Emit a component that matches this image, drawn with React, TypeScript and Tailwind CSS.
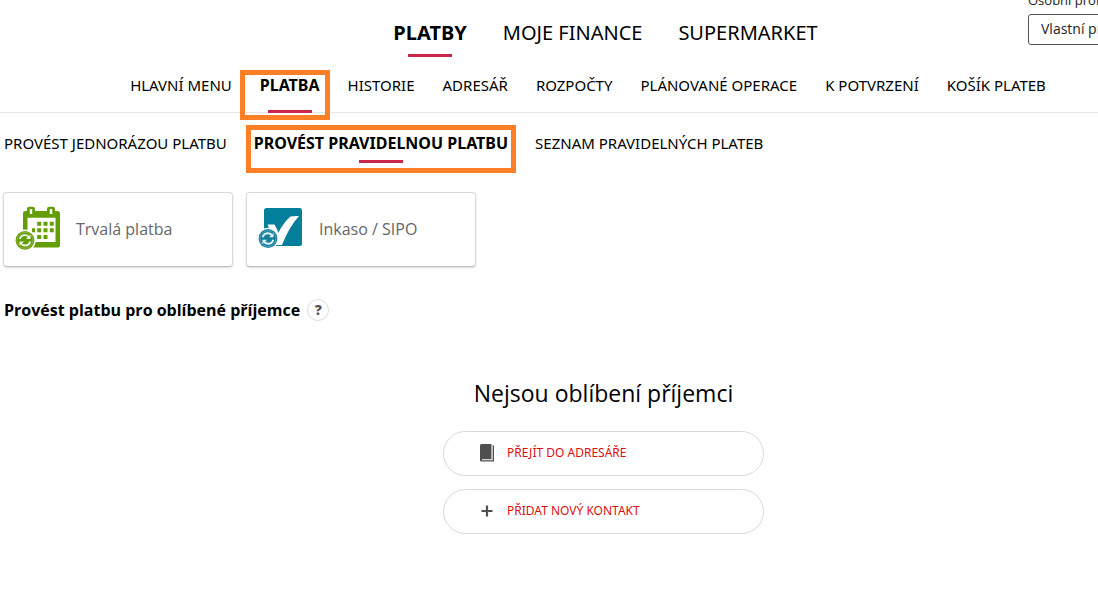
import React from "react";

const navFont = "font-['Noto_Sans',sans-serif]";

type NavItem = { label: string; active?: boolean };

const mainItems: NavItem[] = [
  { label: "PLATBY", active: true },
  { label: "MOJE FINANCE" },
  { label: "SUPERMARKET" },
];

const sectionItems: NavItem[] = [
  { label: "HLAVNÍ MENU" },
  { label: "PLATBA", active: true },
  { label: "HISTORIE" },
  { label: "ADRESÁŘ" },
  { label: "ROZPOČTY" },
  { label: "PLÁNOVANÉ OPERACE" },
  { label: "K POTVRZENÍ" },
  { label: "KOŠÍK PLATEB" },
];

const paymentItems: NavItem[] = [
  { label: "PROVÉST JEDNORÁZOU PLATBU" },
  { label: "PROVÉST PRAVIDELNOU PLATBU", active: true },
  { label: "SEZNAM PRAVIDELNÝCH PLATEB" },
];

type NavLinkProps = { item: NavItem; bar: string; activeText?: string; frame?: string };

function NavLink({ item, bar, activeText = "", frame }: NavLinkProps) {
  return (
    <a
      href="#"
      aria-current={item.active ? "page" : undefined}
      className={`relative whitespace-nowrap ${item.active ? `font-bold ${activeText}` : ""}`}
    >
      {item.label}
      {item.active && (
        <span className={`absolute left-1/2 h-[3px] w-11 -translate-x-1/2 bg-[#c9264a] ${bar}`} />
      )}
      {item.active && frame && (
        <span className={`pointer-events-none absolute border-5 border-[#ff7f27] ${frame}`} />
      )}
    </a>
  );
}

function Recurring({ color }: { color: string }) {
  return (
    <g>
      <circle cx="10" cy="34.300" r="10.800" fill="#fff" />
      <circle cx="10" cy="34.300" r="9.400" fill={color} />
      <circle cx="10" cy="34.300" r="8" fill="none" stroke="#fff" strokeOpacity=".3" strokeWidth=".8" />
      <path
        d="M4.800 33.100c.7-2.800 2.600-4 5-4 1.700 0 3 .6 4 1.700M15.200 35.500c-.7 2.800-2.600 4-5 4-1.700 0-3-.6-4-1.700"
        fill="none"
        stroke="#fff"
        strokeOpacity=".9"
        strokeWidth="1.900"
      />
      <path d="M15.500 28.800v4.300h-4.500zM4.500 39.800v-4.300H9z" fill="#fff" fillOpacity=".9" />
    </g>
  );
}

function CalendarIcon() {
  return (
    <svg viewBox="0 0 46 46" className="size-[46px] shrink-0" aria-hidden="true">
      <path
        fill="#649e06"
        fillRule="evenodd"
        d="M10.500 5H12V3q0-2.300 2.300-2.300h3.400Q20 .7 20 3v2h12V3q0-2.300 2.300-2.300h3.400Q40 .7 40 3v2h2.500Q45 5 45 7.500V39.500q0 2-2 2H10q-2 0-2-2v-32Q8 5 10.500 5zM12.500 11.800V36h28V11.800zM14.800 3v5h2.400V3zM34.800 3v5h2.400V3z"
      />
      <path
        fill="#649e06"
        d="M22.200 15.700h4v4h-4zM28.500 15.700h4v4h-4zM34.800 15.700h4v4h-4zM17 22.300h3v4h-3zM22.200 22.300h4v4h-4zM28.500 22.300h4v4h-4zM34.800 22.300h4v4h-4zM22.200 29h4v4h-4zM28.500 29h4v4h-4z"
      />
      <Recurring color="#649e06" />
    </svg>
  );
}

function CheckIcon() {
  return (
    <svg viewBox="0 0 46 46" className="size-[46px] shrink-0" aria-hidden="true">
      <rect x="6" y="2" width="38" height="38" rx="2.500" fill="#047f9b" />
      <path fill="#fff" d="M9.500 18.500h7q2.400 4 3.800 8.300Q26 16 32.500 10.500q4-.8 8.500-.5Q31 21 24 39h-6.500Q14.500 28 9.500 18.500z" />
      <g transform="translate(0 -1.800)">
        <Recurring color="#167f9d" />
      </g>
    </svg>
  );
}

function BookIcon() {
  return (
    <svg viewBox="0 0 14 18" className="h-[18px] w-3.5" aria-hidden="true">
      <path fill="#4f4f4f" d="M1.500 0H11.500v15.200H2v1H12.700V1.500H14V17.500H1.500Q0 17.500 0 16V1.500Q0 0 1.500 0z" />
      <path fill="#bbb" d="M11.500 1h1.200v15.200h-1.200z" />
    </svg>
  );
}

function PlusIcon() {
  return (
    <svg viewBox="0 0 12 12" className="size-3" aria-hidden="true">
      <path stroke="#4f4f4f" strokeWidth="2.200" d="M6 .5v11M.5 6h11" />
    </svg>
  );
}

function PaymentCard({ icon, label }: { icon: React.ReactNode; label: string }) {
  return (
    <button
      type="button"
      className="flex h-[75px] w-[230px] items-center gap-[15px] rounded border border-[#d9d9d9] border-b-[#bfbfbf] bg-white pb-0.5 pl-[11px] text-base text-[#666] shadow-[0_1px_2px_rgba(0,0,0,0.15)]"
    >
      {icon}
      {label}
    </button>
  );
}

function ActionButton({ icon, label }: { icon: React.ReactNode; label: string }) {
  return (
    <button
      type="button"
      className={`flex h-[45px] w-full items-center gap-3 rounded-full border border-[#d9d9d9] pb-0.5 pl-[35px] text-xs text-[#dc0f0f] ${navFont}`}
    >
      <span className="flex w-4 justify-center">{icon}</span>
      {label}
    </button>
  );
}

export default function App() {
  return (
    <div className="overflow-hidden bg-white font-['Open_Sans',sans-serif] text-black">
      <header>
        <div className="flex h-15 items-start">
          <nav
            aria-label="Hlavní"
            className={`flex flex-1 justify-center gap-9 pt-[19px] pl-[183px] text-xl leading-7 ${navFont}`}
          >
            {mainItems.map((item) => (
              <NavLink key={item.label} item={item} bar="top-[35px]" />
            ))}
          </nav>
          <div className="-mt-2 w-[70px] shrink-0 text-sm text-[#222]">
            <label htmlFor="profile" className="block h-[22px] text-[13px] leading-4 whitespace-nowrap">
              Osobní profil
            </label>
            <select
              id="profile"
              className="h-[31px] w-[180px] appearance-none rounded-[3px] border border-[#555] bg-white pb-0.5 pl-3 text-sm"
            >
              <option>Vlastní profil</option>
            </select>
          </div>
        </div>
        <nav
          aria-label="Sekce"
          className={`flex h-[53px] justify-center gap-7 border-b border-[#e6e6e6] pt-[13px] pl-[78px] text-[15px] leading-6 ${navFont}`}
        >
          {sectionItems.map((item) => (
            <NavLink
              key={item.label}
              item={item}
              activeText="text-base"
              bar="top-[37px]"
              frame="-left-5 -right-2.5 -top-[3px] h-[50px]"
            />
          ))}
        </nav>
      </header>

      <nav aria-label="Platba" className={`flex gap-[27px] pt-[18px] pl-1 text-[15px] leading-6 ${navFont}`}>
        {paymentItems.map((item) => (
          <NavLink
            key={item.label}
            item={item}
            activeText="text-base"
            bar="top-[29px]"
            frame="-inset-x-2 -top-1.5 h-12"
          />
        ))}
      </nav>

      <main className="px-[3px] pt-[37px]">
        <div className="flex gap-[13px]">
          <PaymentCard icon={<CalendarIcon />} label="Trvalá platba" />
          <PaymentCard icon={<CheckIcon />} label="Inkaso / SIPO" />
        </div>

        <div className="mt-[31px] flex items-center gap-[7px] pl-px">
          <h2 className="text-base leading-6 font-bold">Provést platbu pro oblíbené příjemce</h2>
          <button
            type="button"
            aria-label="Nápověda"
            className="flex size-[22px] items-center justify-center rounded-full border border-[#ddd] text-sm font-extrabold text-[#555]"
          >
            ?
          </button>
        </div>

        <section className="flex justify-center pt-[55px] pl-[109px]">
          <div className="flex w-[321px] flex-col items-center">
            <h3 className="text-[23px] leading-8">Nejsou oblíbení příjemci</h3>
            <div className="mt-[22px] flex w-full flex-col gap-[13px]">
              <ActionButton icon={<BookIcon />} label="PŘEJÍT DO ADRESÁŘE" />
              <ActionButton icon={<PlusIcon />} label="PŘIDAT NOVÝ KONTAKT" />
            </div>
          </div>
        </section>
      </main>
    </div>
  );
}
